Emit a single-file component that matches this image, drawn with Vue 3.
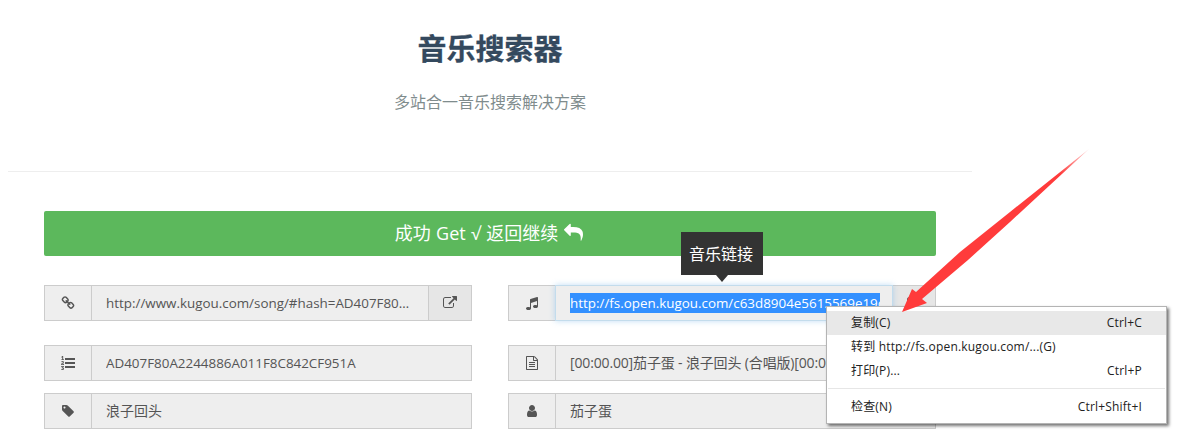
<script setup>
const P = {
  link: 'M1520 1216q0-40-28-68l-208-208q-28-28-68-28-42 0-72 32 3 3 19 18.5t21.5 21.5 15 19 13 25.5 3.5 27.5q0 40-28 68t-68 28q-15 0-27.5-3.5t-25.5-13-19-15-21.5-21.5-18.5-19q-33 31-33 73 0 40 28 68l206 207q27 27 68 27 40 0 68-26l147-146q28-28 28-67zm-703-705q0-40-28-68l-206-207q-28-28-68-28-39 0-68 27l-147 146q-28 28-28 67 0 40 28 68l208 208q27 27 68 27 42 0 72-31-3-3-19-18.5t-21.5-21.5-15-19-13-25.5-3.5-27.5q0-40 28-68t68-28q15 0 27.5 3.5t25.5 13 19 15 21.5 21.5 18.5 19q33-31 33-73zm895 705q0 120-85 203l-147 146q-83 83-203 83-121 0-204-85l-206-207q-83-83-83-203 0-123 88-209l-88-88q-86 88-208 88-120 0-204-84l-208-208q-84-84-84-204t85-203l147-146q83-83 203-83 121 0 204 85l206 207q83 83 83 203 0 123-88 209l88 88q86-88 208-88 120 0 204 84l208 208q84 84 84 204z',
  ext: 'M1408 928v320q0 119-84.5 203.5t-203.5 84.5h-832q-119 0-203.5-84.5t-84.5-203.5v-832q0-119 84.5-203.5t203.5-84.5h704q14 0 23 9t9 23v64q0 14-9 23t-23 9h-704q-66 0-113 47t-47 113v832q0 66 47 113t113 47h832q66 0 113-47t47-113v-320q0-14 9-23t23-9h64q14 0 23 9t9 23zm384-864v512q0 26-19 45t-45 19-45-19l-176-176-652 652q-10 10-23 10t-23-10l-114-114q-10-10-10-23t10-23l652-652-176-176q-19-19-19-45t19-45 45-19h512q26 0 45 19t19 45z',
  list: 'M381 1620q0 80-54.5 126t-135.5 46q-106 0-172-66l57-88q49 45 106 45 29 0 50.5-14.5t21.5-42.5q0-64-105-56l-26-56q8-10 32.5-43.5t42.5-54 37-38.5v-1q-16 0-48.5 1t-48.5 1v53h-106v-152h333v88l-95 115q51 12 81 49t30 88zm2-627v159h-362q-6-36-6-54 0-51 23.5-93t56.5-68 66-47.5 56.5-43.5 23.5-45q0-25-14.5-38.5t-39.5-13.5q-46 0-81 58l-85-59q24-51 71.5-79.5t105.5-28.5q73 0 123 41.5t50 112.5q0 50-34 91.5t-75 64.5-75.5 50.5-35.5 52.5h127v-60h105zm1409 319v192q0 13-9.5 22.5t-22.5 9.5h-1216q-13 0-22.5-9.5t-9.5-22.5v-192q0-14 9-23t23-9h1216q13 0 22.5 9.5t9.5 22.5zm-1408-899v99h-335v-99h107q0-41 .5-121.5t.5-121.5v-12h-2q-8 17-50 54l-71-76 136-127h106v404h108zm1408 387v192q0 13-9.5 22.5t-22.5 9.5h-1216q-13 0-22.5-9.5t-9.5-22.5v-192q0-14 9-23t23-9h1216q13 0 22.5 9.5t9.5 22.5zm0-512v192q0 13-9.5 22.5t-22.5 9.5h-1216q-13 0-22.5-9.5t-9.5-22.5v-192q0-13 9.5-22.5t22.5-9.5h1216q13 0 22.5 9.5t9.5 22.5z',
  tag: 'M576 448q0-53-37.5-90.5t-90.5-37.5-90.5 37.5-37.5 90.5 37.5 90.5 90.5 37.5 90.5-37.5 37.5-90.5zm1067 576q0 53-37 90l-491 492q-39 37-91 37-53 0-90-37l-715-716q-38-37-64.5-101t-26.5-117v-416q0-52 38-90t90-38h416q53 0 117 26.5t102 64.5l715 714q37 39 37 91z',
  music: 'M1664 224v1120q0 50-34 89t-86 60.5-103.5 32-96.5 10.5-96.5-10.5-103.5-32-86-60.5-34-89 34-89 86-60.5 103.5-32 96.5-10.5q105 0 192 39v-537l-768 237v709q0 50-34 89t-86 60.5-103.5 32-96.5 10.5-96.5-10.5-103.5-32-86-60.5-34-89 34-89 86-60.5 103.5-32 96.5-10.5q105 0 192 39v-967q0-31 19-56.5t49-35.5l832-256q12-4 28-4 40 0 68 28t28 68z',
  file: 'M1596 380q28 28 48 76t20 88v1152q0 40-28 68t-68 28h-1344q-40 0-68-28t-28-68v-1600q0-40 28-68t68-28h896q40 0 88 20t76 48zm-444-244v376h376q-10-29-22-41l-313-313q-12-12-41-22zm384 1528v-1024h-416q-40 0-68-28t-28-68v-416h-768v1536h1280zm-1024-864q0-14 9-23t23-9h704q14 0 23 9t9 23v64q0 14-9 23t-23 9h-704q-14 0-23-9t-9-23v-64zm736 224q14 0 23 9t9 23v64q0 14-9 23t-23 9h-704q-14 0-23-9t-9-23v-64q0-14 9-23t23-9h704zm0 256q14 0 23 9t9 23v64q0 14-9 23t-23 9h-704q-14 0-23-9t-9-23v-64q0-14 9-23t23-9h704z',
  user: 'M1536 1399q0 109-62.5 187t-150.5 78h-854q-88 0-150.5-78t-62.5-187q0-85 8.5-160.5t31.5-152 58.5-131 94-89 134.5-34.5q131 128 313 128t313-128q76 0 134.5 34.5t94 89 58.5 131 31.5 152 8.5 160.5zm-256-887q0 159-112.5 271.5t-271.5 112.5-271.5-112.5-112.5-271.5 112.5-271.5 271.5-112.5 271.5 112.5 112.5 271.5z',
  reply: 'M1792 1120q0 166-127 451-3 7-10.5 24t-13.5 30-13 22q-12 17-28 17-15 0-23.5-10t-8.5-25q0-9 2.5-26.5t2.5-23.5q5-68 5-123 0-101-17.5-181t-48.5-138.5-80-101-105.5-69.5-133-42.5-154-21.5-175.5-6h-224v256q0 26-19 45t-45 19-45-19l-512-512q-19-19-19-45t19-45l512-512q19-19 45-19t45 19 19 45v256h224q713 0 875 403 53 134 53 333z'
}
const rows = [
  { icon: 'link', text: 'http://www.kugou.com/song/#hash=AD407F80A2244886A011F8C842CF951A', btn: true, cls: 'first', latin: true },
  { icon: 'music', text: 'http://fs.open.kugou.com/c63d8904e5615569e19d0f8e0f0c9d4a/5a0f/G083/M04/mp3', btn: true, focus: true, cls: 'first', latin: true },
  { icon: 'list', text: 'AD407F80A2244886A011F8C842CF951A', latin: true },
  { icon: 'file', text: '[00:00.00]茄子蛋 - 浪子回头 (合唱版)[00:00.10]词：黄士杰 曲：黄士杰', tight: true },
  { icon: 'tag', text: '浪子回头' },
  { icon: 'user', text: '茄子蛋' }
]
const menu = [
  { label: '复制(C)', key: 'Ctrl+C', active: true },
  { label: '转到 http://fs.open.kugou.com/...(G)', key: '' },
  { label: '打印(P)...', key: 'Ctrl+P', sep: true },
  { label: '检查(N)', key: 'Ctrl+Shift+I' }
]
</script>

<template>
  <div class="page">
    <header class="head">
      <h1>音乐搜索器</h1>
      <p>多站合一音乐搜索解决方案</p>
    </header>
    <main class="body">
      <button class="back">
        <span class="back-label">成功 Get √ 返回继续</span>
        <svg viewBox="0 0 1792 1792" class="reply"><path :d="P.reply" /></svg>
      </button>
      <div class="grid">
        <div v-for="r in rows" :key="r.icon" class="field" :class="r.cls">
          <span class="addon"><svg viewBox="0 0 1792 1792"><path :d="P[r.icon]" /></svg></span>
          <div class="input" :class="{ focus: r.focus, latin: r.latin, tight: r.tight }">
            <span v-if="r.focus" class="clip"><span class="sel">{{ r.text }}</span></span>
            <span v-else class="ell">{{ r.text }}</span>
          </div>
          <span v-if="r.btn" class="btn"><svg viewBox="0 0 1792 1792"><path :d="P.ext" /></svg></span>
        </div>
      </div>
    </main>

    <div class="tip">音乐链接</div>

    <ul class="menu">
      <template v-for="m in menu" :key="m.label">
        <li class="item" :class="{ active: m.active }"><span>{{ m.label }}</span><span>{{ m.key }}</span></li>
        <li v-if="m.sep" class="sep"></li>
      </template>
    </ul>

    <svg class="arrow" viewBox="0 0 1189 447" width="1189" height="447">
      <defs>
        <linearGradient id="fade" x1="1089" y1="149" x2="1060" y2="174" gradientUnits="userSpaceOnUse">
          <stop offset="0" stop-color="#ff3b3b" stop-opacity=".2" />
          <stop offset="1" stop-color="#ff3b3b" />
        </linearGradient>
      </defs>
      <polygon points="1089,149 1010,222 968,260 922,299 927,303 902,312 912,289 916,292 960,252 1010,212" fill="url(#fade)" />
    </svg>
  </div>
</template>

<style>
html, body { margin: 0; overflow: hidden; background: #fff; }
</style>

<style scoped>
.page {
  position: relative;
  width: 1189px;
  height: 447px;
  overflow: hidden;
  padding-left: 8px;
  box-sizing: border-box;
  font-family: "Open Sans", "Noto Sans CJK SC", sans-serif;
  color: #555;
}
.head {
  width: 964px;
  height: 171px;
  border-bottom: 1px solid #eee;
  text-align: center;
}
h1 {
  margin: 0;
  padding-top: 29px;
  font-size: 29px;
  line-height: 40px;
  font-weight: 700;
  color: #34495e;
  -webkit-text-stroke: .3px #34495e;
}
.head p {
  margin: 0;
  padding-top: 21px;
  font-size: 16px;
  line-height: 24px;
  color: #7f8c8d;
}
.body {
  width: 892px;
  margin-top: 39px;
  padding-left: 36px;
}
.back {
  display: flex;
  align-items: center;
  justify-content: center;
  gap: 6px;
  width: 892px;
  height: 45px;
  border: 0;
  border-radius: 2px;
  background: #5cb85c;
  color: #fff;
  font: inherit;
  font-size: 18px;
  padding: 0 2px 3px 0;
}
.back-label { word-spacing: .7px; }
.reply { width: 19px; height: 19px; fill: #fff; }
.grid {
  display: grid;
  grid-template-columns: 428px 428px;
  column-gap: 36px;
  margin-top: 29px;
}
.field {
  display: flex;
  height: 36px;
  margin-bottom: 12px;
  font-size: 14px;
  line-height: 34px;
}
.field.first { margin-bottom: 24px; }
.addon {
  flex: none;
  width: 48px;
  box-sizing: border-box;
  display: flex;
  align-items: center;
  justify-content: center;
  background: #eee;
  border: 1px solid #ccc;
}
.addon svg, .btn svg { width: 14px; height: 14px; fill: #555; }
.input {
  flex: 1;
  min-width: 0;
  box-sizing: border-box;
  background: #eee;
  border: 1px solid #ccc;
  border-left: 0;
  padding: 0 14px;
  display: flex;
}
.input.latin { font-size: 13.4px; }
.input.tight { letter-spacing: -.15px; }
.input.focus {
  margin-left: -1px;
  padding: 0 12px 0 14px;
  border: 1px solid #c3dcec;
  box-shadow: 0 0 6px rgba(102, 175, 233, .4);
  position: relative;
}
.ell {
  display: block;
  width: 100%;
  overflow: hidden;
  white-space: nowrap;
  text-overflow: ellipsis;
}
.clip {
  display: block;
  width: 100%;
  overflow: hidden;
  white-space: nowrap;
}
.sel {
  background: #3390ff;
  color: #fff;
  padding: 1px 0;
}
.btn {
  flex: none;
  width: 44px;
  box-sizing: border-box;
  display: flex;
  align-items: center;
  justify-content: center;
  background: #e6e6e6;
  border: 1px solid #ccc;
  margin-left: -1px;
}
.tip {
  position: absolute;
  left: 681px;
  top: 232px;
  width: 82px;
  height: 43px;
  padding-right: 2px;
  box-sizing: border-box;
  background: #333;
  color: #fff;
  font-size: 16px;
  line-height: 44px;
  text-align: center;
}
.tip::after {
  content: "";
  position: absolute;
  left: 35px;
  top: 43px;
  border-style: solid;
  border-width: 7px 6px 0;
  border-color: #333 transparent transparent;
}
.menu {
  position: absolute;
  left: 826px;
  top: 306px;
  width: 341px;
  box-sizing: border-box;
  margin: 0;
  padding: 4px 0;
  list-style: none;
  background: #fff;
  border: 1px solid #b4b4b4;
  box-shadow: 2px 2px 3px rgba(0, 0, 0, .55);
  font-size: 12px;
  letter-spacing: .18px;
  color: #222;
}
.item {
  display: flex;
  justify-content: space-between;
  height: 24px;
  line-height: 24px;
  padding: 0 24px;
}
.item.active { background: #e8e8e8; }
.sep {
  height: 1px;
  background: #e6e6e6;
  margin: 5px 1px 6px;
}
.arrow {
  position: absolute;
  left: 0;
  top: 0;
  pointer-events: none;
}
</style>
